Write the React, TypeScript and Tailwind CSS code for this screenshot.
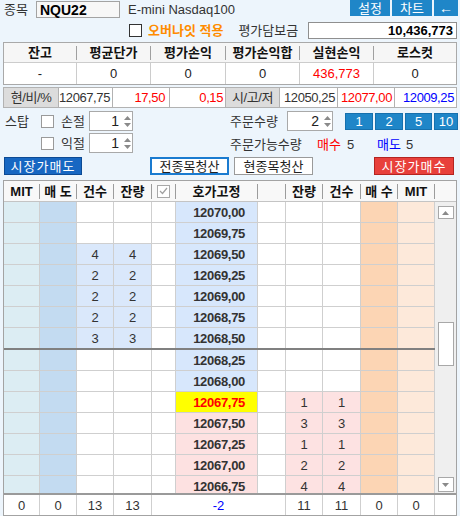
import React from 'react';

type Row = { p: string; s?: number; b?: number; kind: 'ask' | 'cur' | 'bid' };

const rows: Row[] = [
    { p: '12070,00', kind: 'ask' },
    { p: '12069,75', kind: 'ask' },
    { p: '12069,50', s: 4, kind: 'ask' },
    { p: '12069,25', s: 2, kind: 'ask' },
    { p: '12069,00', s: 2, kind: 'ask' },
    { p: '12068,75', s: 2, kind: 'ask' },
    { p: '12068,50', s: 3, kind: 'ask' },
    { p: '12068,25', kind: 'ask' },
    { p: '12068,00', kind: 'ask' },
    { p: '12067,75', b: 1, kind: 'cur' },
    { p: '12067,50', b: 3, kind: 'bid' },
    { p: '12067,25', b: 1, kind: 'bid' },
    { p: '12067,00', b: 2, kind: 'bid' },
    { p: '12066,75', b: 4, kind: 'bid' },
];

function Arrows() {
    return (
        <div className="w-[10px] flex flex-col items-center gap-[3px]">
            <svg width="7" height="4" viewBox="0 0 7 4">
                <path d="M0 4 L3.5 0 L7 4Z" fill="#8a8a8a" />
            </svg>
            <svg width="7" height="4" viewBox="0 0 7 4">
                <path d="M0 0 L3.5 4 L7 0Z" fill="#8a8a8a" />
            </svg>
        </div>
    );
}

function Spin({ value, w }: { value: number; w: string }) {
    return (
        <div className={`${w} h-[20px] bg-white border border-[#a9a9a9] flex items-center`}>
            <span className="flex-1 text-right pr-[3px] text-[14px] text-[#222]">{value}</span>
            <Arrows />
        </div>
    );
}

function Box() {
    return <div className="w-[13px] h-[13px] bg-white border border-[#9a9a9a] shrink-0" />;
}

function BlueBtn({ label, w }: { label: string; w: string }) {
    return (
        <div
            className={`${w} h-[17px] bg-[#1f86c8] border border-[#1670ad] text-white text-[13px] flex items-center justify-center leading-none`}
        >
            {label}
        </div>
    );
}

export default function App() {
    const ob = 'h-full border-r border-[#cfcfcf] flex items-center justify-center';
    return (
        <div className="w-[460px] h-[516px] overflow-hidden bg-[#edf5fc] text-[12px] text-[#222] font-[family-name:Liberation_Sans,Noto_Sans_CJK_KR,sans-serif] leading-none">
            {/* top line */}
            <div className="flex h-[19px] items-start">
                <span className="w-[36px] pl-[4px] pt-[3px] text-[13px] text-[#333]">종목</span>
                <div className="w-[84px] h-[17px] mt-[1px] border border-[#a3a3a3] bg-[#f7f7f7] flex items-center pl-[3px] text-[14px] font-bold text-black">
                    NQU22
                </div>
                <span className="ml-[8px] pt-[3px] text-[13px] text-[#333]">E-mini Nasdaq100</span>
                <div className="ml-auto mr-[2px] flex gap-[2px]">
                    <div className="w-[40px] h-[16px] bg-[#1f86c8] text-white text-[13px] flex items-center justify-center">설정</div>
                    <div className="w-[40px] h-[16px] bg-[#1f86c8] text-white text-[13px] flex items-center justify-center">차트</div>
                    <div className="w-[24px] h-[16px] bg-[#1f86c8] text-white text-[14px] flex items-center justify-center">←</div>
                </div>
            </div>
            <div className="flex h-[22px] items-center">
                <div className="ml-[129px] w-[13px] h-[13px] bg-white border border-[#333]" />
                <span className="ml-[6px] text-[13px] font-bold text-[#ff8c00]">오버나잇 적용</span>
                <span className="ml-[15px] text-[13px] text-[#333]">평가담보금</span>
                <div className="ml-auto mr-[3px] w-[149px] h-[17px] bg-white border border-[#8f8f8f] flex items-center justify-end pr-[3px] text-[13px] font-bold text-black">
                    10,436,773
                </div>
            </div>

            {/* balance table */}
            <div className="mx-[3px] mt-[1px] border border-[#a9a9a9]">
                <div className="grid grid-cols-[73px_74px_75px_74px_74px_82px] h-[20px] bg-[#f6f6f6] border-b border-[#cccccc] text-[13px] font-bold text-[#111]">
                    {['잔고', '평균단가', '평가손익', '평가손익합', '실현손익', '로스컷'].map((h, i) => (
                        <div key={h} className="flex items-center justify-center">
                            <span className="flex-1 text-center">{h}</span>
                            {i < 5 && <div className="w-px h-[14px] bg-[#a0a0a0]" />}
                        </div>
                    ))}
                </div>
                <div className="grid grid-cols-[73px_74px_75px_74px_74px_82px] h-[21px] bg-white text-[13px] text-[#222]">
                    <div className="border-r border-[#cccccc] flex items-center justify-center">-</div>
                    <div className="border-r border-[#cccccc] flex items-center justify-center">0</div>
                    <div className="border-r border-[#cccccc] flex items-center justify-center">0</div>
                    <div className="border-r border-[#cccccc] flex items-center justify-center">0</div>
                    <div className="border-r border-[#cccccc] flex items-center justify-center text-[#ff0000]">436,773</div>
                    <div className="flex items-center justify-center">0</div>
                </div>
            </div>

            {/* price strip */}
            <div className="mx-[3px] mt-[2px] h-[21px] border border-[#b2b2b2] grid grid-cols-[55px_54px_57px_56px_54px_58px_57px_61px] text-[13px] tracking-[-0.4px]">
                <div className="bg-[#dcdcdc] border-r border-[#b2b2b2] flex items-center justify-center text-[#333]">현/비/%</div>
                <div className="bg-white border-r border-[#b2b2b2] flex items-center justify-end pr-[2px] text-[#333]">12067,75</div>
                <div className="bg-white border-r border-[#b2b2b2] flex items-center justify-end pr-[4px] text-[#ff0000]">17,50</div>
                <div className="bg-white border-r border-[#b2b2b2] flex items-center justify-end pr-[2px] text-[#ff0000]">0,15</div>
                <div className="bg-[#dcdcdc] border-r border-[#b2b2b2] flex items-center justify-center text-[#333]">시/고/저</div>
                <div className="bg-white border-r border-[#b2b2b2] flex items-center justify-end pr-[2px] text-[#333]">12050,25</div>
                <div className="bg-white border-r border-[#b2b2b2] flex items-center justify-end pr-[2px] text-[#ff0000]">12077,00</div>
                <div className="bg-white flex items-center justify-end pr-[2px] text-[#0000ff]">12009,25</div>
            </div>

            {/* order controls */}
            <div className="flex h-[20px] mt-[3px] items-center text-[13px] text-[#333]">
                <div className="w-[230px] flex items-center">
                    <span className="w-[41px] pl-[5px]">스탑</span>
                    <Box />
                    <span className="ml-[7px] w-[28px]">손절</span>
                    <Spin value={1} w="w-[44px]" />
                </div>
                <div className="flex items-center">
                    <span className="w-[57px]">주문수량</span>
                    <Spin value={2} w="w-[46px]" />
                    <div className="ml-[12px] flex gap-[2px]">
                        <BlueBtn label="1" w="w-[28px]" />
                        <BlueBtn label="2" w="w-[28px]" />
                        <BlueBtn label="5" w="w-[27px]" />
                        <BlueBtn label="10" w="w-[24px]" />
                    </div>
                </div>
            </div>
            <div className="flex h-[20px] mt-[2px] items-center text-[13px] text-[#333]">
                <div className="w-[230px] flex items-center">
                    <span className="w-[41px]" />
                    <Box />
                    <span className="ml-[7px] w-[28px]">익절</span>
                    <Spin value={1} w="w-[44px]" />
                </div>
                <div className="flex items-center pt-[3px]">
                    <span className="w-[87px]">주문가능수량</span>
                    <span className="w-[30px] text-[#ff0000]">매수</span>
                    <span className="w-[30px]">5</span>
                    <span className="w-[29px] text-[#0000ff]">매도</span>
                    <span>5</span>
                </div>
            </div>
            <div className="flex h-[18px] mt-[4px] items-center text-[13px]">
                <div className="ml-[4px] w-[78px] h-[18px] bg-[#1767c2] border border-[#0c4a94] text-white flex items-center justify-center tracking-[1px]">
                    시장가매도
                </div>
                <div className="ml-[68px] w-[79px] h-[18px] bg-white border-2 border-[#1a7bd0] text-[#222] flex items-center justify-center">
                    전종목청산
                </div>
                <div className="ml-[5px] w-[79px] h-[18px] bg-white border border-[#9a9a9a] text-[#222] flex items-center justify-center">
                    현종목청산
                </div>
                <div className="ml-[61px] w-[80px] h-[18px] bg-[#e8403b] border border-[#b42420] text-white flex items-center justify-center tracking-[1px]">
                    시장가매수
                </div>
            </div>

            {/* order book */}
            <div className="mx-[3px] mt-[5px] border border-[#a3a3a3] bg-white">
                <div className="grid grid-cols-[36px_37px_37px_38px_24px_82px_28px_37px_38px_37px_37px_21px] h-[21px] bg-[#f8f8f8] border-b border-[#c4c4c4] text-[13px] font-bold text-[#111]">
                    {['MIT', '매 도', '건수', '잔량', 'chk', '호가고정', '', '잔량', '건수', '매 수', 'MIT', ''].map((h, i) => (
                        <div key={i} className="flex items-center">
                            <div className="flex-1 flex items-center justify-center">
                                {h === 'chk' ? (
                                    <div className="w-[13px] h-[13px] border border-[#a8a8a8] bg-white flex items-center justify-center">
                                        <svg width="9" height="8" viewBox="0 0 9 8">
                                            <path d="M1 4 L3.5 6.5 L8 1" stroke="#a0a0a0" strokeWidth="1.2" fill="none" />
                                        </svg>
                                    </div>
                                ) : (
                                    h
                                )}
                            </div>
                            {i < 11 && <div className="w-px h-[15px] bg-[#9c9c9c]" />}
                        </div>
                    ))}
                </div>
                <div className="flex h-[291px] overflow-hidden">
                    <div className="w-[431px]">
                        {rows.map((r, i) => (
                            <div
                                key={r.p}
                                className={`grid grid-cols-[36px_37px_37px_38px_24px_82px_28px_37px_38px_37px_37px] ${
                                    i === 6 ? 'h-[22px] border-b-2 border-[#808080]' : 'h-[21px] border-b border-[#cfcfcf]'
                                } text-[13px] text-[#333]`}
                            >
                                <div className={`${ob} bg-[#dcedf3]`} />
                                <div className={`${ob} bg-[#c3dbf1]`} />
                                <div className={`${ob} ${r.s ? 'bg-[#dae8fb]' : 'bg-white'}`}>{r.s}</div>
                                <div className={`${ob} ${r.s ? 'bg-[#dae8fb]' : 'bg-white'}`}>{r.s}</div>
                                <div className={`${ob} bg-white`} />
                                <div
                                    className={`h-full border-r border-[#cfcfcf] flex items-center justify-end pr-[12px] font-bold tracking-[-0.3px] ${
                                        r.kind === 'ask'
                                            ? 'bg-[#d7e7fc] text-[#333]'
                                            : r.kind === 'cur'
                                              ? 'bg-[#ffff00] text-[#ff0000]'
                                              : 'bg-[#fde1e1] text-[#333]'
                                    }`}
                                >
                                    {r.p}
                                </div>
                                <div className={`${ob} bg-white`} />
                                <div className={`${ob} ${r.b ? 'bg-[#fde2e2]' : 'bg-white'}`}>{r.b}</div>
                                <div className={`${ob} ${r.b ? 'bg-[#fde2e2]' : 'bg-white'}`}>{r.b}</div>
                                <div className={`${ob} bg-[#fcd5b4]`} />
                                <div className={`${ob} bg-[#fde9da]`} />
                            </div>
                        ))}
                    </div>
                    <div className="w-[21px] bg-[#efefef] flex flex-col items-center pt-[4px] pb-[1px]">
                        <div className="w-[16px] h-[13px] bg-white border border-[#a8a8a8] flex items-center justify-center">
                            <svg width="7" height="4" viewBox="0 0 7 4">
                                <path d="M0 4 L3.5 0 L7 4Z" fill="#8a8a8a" />
                            </svg>
                        </div>
                        <div className="mt-[103px] w-[16px] h-[44px] bg-white border border-[#a8a8a8]" />
                        <div className="mt-auto w-[16px] h-[15px] bg-white border border-[#a8a8a8] flex items-center justify-center">
                            <svg width="7" height="4" viewBox="0 0 7 4">
                                <path d="M0 0 L3.5 4 L7 0Z" fill="#8a8a8a" />
                            </svg>
                        </div>
                    </div>
                </div>
                <div className="grid grid-cols-[36px_37px_37px_38px_134px_37px_38px_37px_37px_21px] h-[22px] border-t-2 border-[#9a9a9a] text-[13px] text-[#333]">
                    <div className={ob}>0</div>
                    <div className={ob}>0</div>
                    <div className={ob}>13</div>
                    <div className={ob}>13</div>
                    <div className={`${ob} text-[#0000ff]`}>-2</div>
                    <div className={ob}>11</div>
                    <div className={ob}>11</div>
                    <div className={ob}>0</div>
                    <div className={ob}>0</div>
                    <div />
                </div>
            </div>
        </div>
    );
}
